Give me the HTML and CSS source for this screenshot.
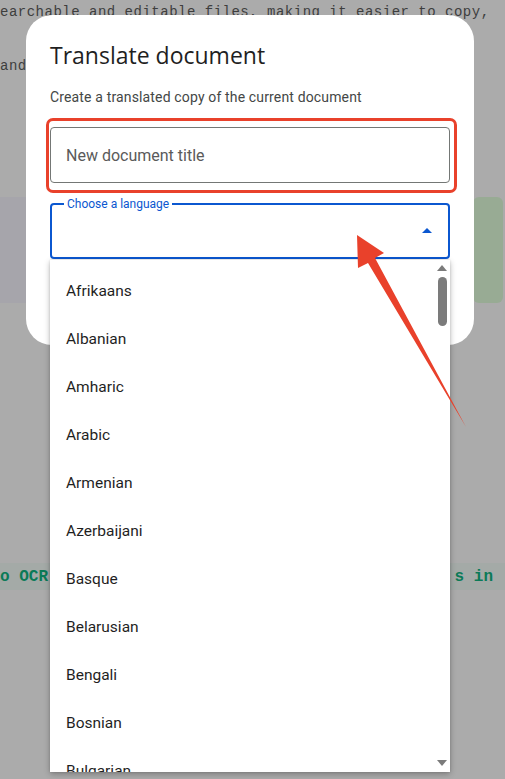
FILE: index.html
```html
<!DOCTYPE html>
<html>
<head>
<meta charset="utf-8">
<link rel="stylesheet" href="styles.css">
</head>
<body>
<div class="page">
  <p class="doc-line first">earchable and editable files, making it easier to copy,</p>
  <p class="doc-line second">and</p>
  <div class="band">
    <div class="band-left"></div>
    <div class="band-right"></div>
  </div>
  <div class="code-line">
    <span class="code-left">o OCR</span>
    <span class="code-right">s in</span>
  </div>
</div>

<div class="dialog">
  <h1 class="dialog-title">Translate document</h1>
  <p class="dialog-sub">Create a translated copy of the current document</p>
  <div class="field">
    <span class="placeholder">New document title</span>
  </div>
  <div class="select">
    <span class="select-label">Choose a language</span>
    <svg class="select-caret" width="10" height="5" viewBox="0 0 10 5"><polygon points="0,5 5,0 10,5" fill="#0b57d0"/></svg>
    <div class="menu">
      <ul class="menu-list">
        <li>Afrikaans</li>
        <li>Albanian</li>
        <li>Amharic</li>
        <li>Arabic</li>
        <li>Armenian</li>
        <li>Azerbaijani</li>
        <li>Basque</li>
        <li>Belarusian</li>
        <li>Bengali</li>
        <li>Bosnian</li>
        <li>Bulgarian</li>
      </ul>
      <div class="scrollbar">
        <svg class="sb-arrow" width="10" height="6" viewBox="0 0 10 6"><polygon points="0,6 5,0 10,6" fill="#7b7b7b"/></svg>
        <div class="sb-thumb"></div>
        <div class="sb-space"></div>
        <svg class="sb-arrow" width="10" height="6" viewBox="0 0 10 6"><polygon points="0,0 10,0 5,6" fill="#7b7b7b"/></svg>
      </div>
    </div>
  </div>
  <div class="dialog-foot"></div>
  <div class="highlight"></div>
</div>

<svg class="annot-arrow" width="505" height="779" viewBox="0 0 505 779">
  <polygon points="357,235 384,253 375,258 466,427 368,263 358,268" fill="#e9412b"/>
</svg>
</body>
</html>
```
FILE: styles.css
```css
html, body {
  margin: 0;
  padding: 0;
}
body {
  width: 505px;
  height: 779px;
  overflow: hidden;
  background: #ababab;
  position: relative;
  font-family: Roboto, "Noto Sans", sans-serif;
}
.page {
  display: flex;
  flex-direction: column;
}
.doc-line {
  margin: 0;
  font-family: "Liberation Mono", monospace;
  font-size: 14px;
  letter-spacing: 0.5px;
  line-height: 20px;
  color: #3e3e3e;
  white-space: nowrap;
}
.doc-line.first {
  margin-top: 2px;
}
.doc-line.second {
  margin-top: 34px;
}
.band {
  margin-top: 121px;
  height: 106px;
  display: flex;
}
.band-left {
  flex: 1;
  background: #a6a5ab;
}
.band-right {
  width: 30px;
  margin-right: 2px;
  background: #98ab94;
  border-radius: 6px;
}
.code-line {
  margin-top: 260px;
  height: 27px;
  background: #a4aaa7;
  display: flex;
  justify-content: space-between;
  align-items: center;
  padding-right: 12px;
  font-family: "Liberation Mono", monospace;
  font-weight: bold;
  font-size: 16px;
  color: #0b7a57;
}
.dialog {
  position: absolute;
  left: 26px;
  top: 15px;
  width: 448px;
  box-sizing: border-box;
  background: #fff;
  border-radius: 26px;
  padding: 24px 24px 24px;
  display: flex;
  flex-direction: column;
}
.dialog-title {
  margin: 0;
  font-family: "Open Sans", Roboto, sans-serif;
  font-weight: 400;
  font-size: 23px;
  line-height: 32px;
  color: #1f1f1f;
}
.dialog-sub {
  margin: 16px 0 0;
  font-size: 14px;
  letter-spacing: 0.15px;
  line-height: 20px;
  color: #444746;
}
.field {
  margin-top: 20px;
  height: 56px;
  box-sizing: border-box;
  border: 1px solid #747775;
  border-radius: 4px;
  display: flex;
  align-items: center;
  padding-left: 15px;
}
.placeholder {
  font-size: 16px;
  color: #5a5a5a;
}
.select {
  margin-top: 20px;
  height: 56px;
  box-sizing: border-box;
  border: 2px solid #0b57d0;
  border-radius: 4px;
  position: relative;
  display: flex;
  align-items: center;
  justify-content: flex-end;
  padding-right: 16px;
}
.select-label {
  position: absolute;
  left: 12px;
  top: -9px;
  padding: 0 3px;
  background: #fff;
  font-size: 12px;
  line-height: 16px;
  color: #0b57d0;
}
.select-caret {
  display: block;
  margin-top: -2px;
}
.menu {
  position: absolute;
  left: -2px;
  top: 55px;
  width: 400px;
  height: 512px;
  background: #fff;
  box-shadow: 0 2px 6px rgba(0,0,0,0.28), 0 0 2px rgba(0,0,0,0.12);
  display: flex;
  overflow: hidden;
  z-index: 2;
}
.menu-list {
  list-style: none;
  margin: 0;
  padding: 7px 0 0;
  flex: 1;
}
.menu-list li {
  height: 48px;
  display: flex;
  align-items: center;
  padding-left: 16px;
  font-size: 15.5px;
  color: #1f1f1f;
}
.scrollbar {
  width: 10px;
  margin-right: 3px;
  padding: 5px 0 6px;
  display: flex;
  flex-direction: column;
  align-items: center;
}
.sb-arrow {
  display: block;
}
.sb-thumb {
  margin-top: 6px;
  width: 9px;
  height: 49px;
  border-radius: 5px;
  background: #7b7b7b;
}
.sb-space {
  flex: 1;
}
.dialog-foot {
  height: 62px;
}
.highlight {
  position: absolute;
  left: 20px;
  top: 103px;
  width: 411px;
  height: 75px;
  box-sizing: border-box;
  border: 3px solid #e9412b;
  border-radius: 7px;
}
.annot-arrow {
  position: absolute;
  left: 0;
  top: 0;
  z-index: 5;
}
```
